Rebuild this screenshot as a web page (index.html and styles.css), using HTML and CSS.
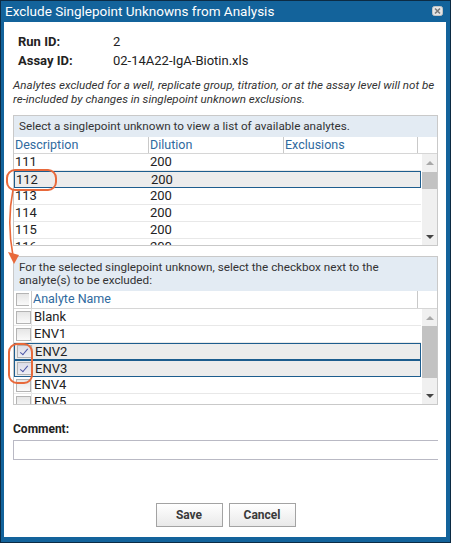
FILE: index.html
```html
<!DOCTYPE html>
<html lang="en">
<head>
  <meta charset="UTF-8">
  <title>Exclude Singlepoint Unknowns from Analysis</title>
  <link rel="stylesheet" href="styles.css">
</head>
<body>

  <div class="dialog">
    <div class="titlebar">
      <span class="title">Exclude Singlepoint Unknowns from Analysis</span>
      <span class="close">
        <svg width="11" height="10" viewBox="0 0 11 10">
          <rect x="0.5" y="0.5" width="10" height="9" rx="2" fill="#e6e6e6" stroke="#c4c4c4"/>
          <path d="M3 2.5 L8 7.5 M8 2.5 L3 7.5" stroke="#7a7a7a" stroke-width="1.6"/>
        </svg>
      </span>
    </div>

    <div class="content">
      <div class="info">
        <div class="info-row"><span class="info-label">Run ID:</span><span>2</span></div>
        <div class="info-row"><span class="info-label">Assay ID:</span><span>02-14A22-IgA-Biotin.xls</span></div>
      </div>

      <p class="note">Analytes excluded for a well, replicate group, titration, or at the assay level will not be <span class="nowrap">re-included</span> by changes in singlepoint unknown exclusions.</p>

      <!-- singlepoint unknowns -->
      <div class="grid">
        <div class="grid-band">Select a singlepoint unknown to view a list of available analytes.</div>
        <div class="grid-head head-samples">
          <span>Description</span>
          <span>Dilution</span>
          <span>Exclusions</span>
          <span></span>
        </div>
        <div class="grid-body body-samples">
          <div class="rows">
            <div class="row row-samples"><span>111</span><span>200</span><span></span></div>
            <div class="row row-samples selected"><span>112</span><span>200</span><span></span></div>
            <div class="row row-samples"><span>113</span><span>200</span><span></span></div>
            <div class="row row-samples"><span>114</span><span>200</span><span></span></div>
            <div class="row row-samples"><span>115</span><span>200</span><span></span></div>
            <div class="row row-samples"><span>116</span><span>200</span><span></span></div>
          </div>
          <div class="scrollbar">
            <span class="arrow-btn"><span class="arrow up"></span></span>
            <span class="track"><span class="thumb thumb-samples"></span></span>
            <span class="arrow-btn"><span class="arrow down"></span></span>
          </div>
        </div>
      </div>

      <!-- analytes -->
      <div class="grid grid-analytes">
        <div class="grid-band band-tall">For the selected singlepoint unknown, select the checkbox next to the<br>analyte(s) to be excluded:</div>
        <div class="grid-head head-analytes">
          <span class="check-cell"><span class="checkbox"></span></span>
          <span>Analyte Name</span>
          <span></span>
        </div>
        <div class="grid-body body-analytes">
          <div class="rows">
            <div class="row row-analytes"><span class="check-cell"><span class="checkbox"></span></span><span>Blank</span></div>
            <div class="row row-analytes"><span class="check-cell"><span class="checkbox"></span></span><span>ENV1</span></div>
            <div class="row row-analytes selected"><span class="check-cell"><span class="checkbox checked"></span></span><span>ENV2</span></div>
            <div class="row row-analytes selected"><span class="check-cell"><span class="checkbox checked"></span></span><span>ENV3</span></div>
            <div class="row row-analytes"><span class="check-cell"><span class="checkbox"></span></span><span>ENV4</span></div>
            <div class="row row-analytes"><span class="check-cell"><span class="checkbox"></span></span><span>ENV5</span></div>
          </div>
          <div class="scrollbar">
            <span class="arrow-btn"><span class="arrow up"></span></span>
            <span class="track"><span class="thumb thumb-analytes"></span></span>
            <span class="arrow-btn"><span class="arrow down"></span></span>
          </div>
        </div>
      </div>

      <label class="comment-label">Comment:</label>
      <input type="text" class="comment-input">

      <div class="buttons">
        <button class="btn">Save</button>
        <button class="btn">Cancel</button>
      </div>
    </div>

    <!-- callout annotations -->
    <svg class="marks" width="451" height="543" viewBox="0 0 451 543">
      <rect x="7" y="170" width="49" height="20" rx="8" fill="none" stroke="#e8693b" stroke-width="2"/>
      <path d="M13 190 C9 210, 9 235, 13 256" fill="none" stroke="#e8693b" stroke-width="1.6"/>
      <polygon points="8,252 19,255 14,264" fill="#e8693b"/>
      <rect x="9" y="344" width="23" height="39" rx="8" fill="none" stroke="#e8693b" stroke-width="2"/>
    </svg>
  </div>

</body>
</html>
```

FILE: styles.css
```css
/* Base */
body {
  margin: 0;
  font-family: Roboto, "Liberation Sans", Arial, sans-serif;
  color: #222;
}

.dialog {
  position: relative;
  width: 451px;
  height: 543px;
  box-sizing: border-box;
  border: 1px solid #0c2b44;
  background-color: #13639b;
  padding: 0 4px 5px 3px;
  display: flex;
  flex-direction: column;
}

/* Title bar */
.titlebar {
  height: 21px;
  display: flex;
  align-items: center;
  justify-content: space-between;
  padding: 0 3px 0 1px;
}

.title {
  color: #fff;
  font-size: 13.5px;
  line-height: 21px;
}

.close {
  display: flex;
  margin-top: -1px;
}

/* Content */
.content {
  flex: 1;
  background-color: #fff;
  padding: 10px 8px 0 9px;
  display: flex;
  flex-direction: column;
}

.info-row {
  display: flex;
  height: 19px;
  align-items: center;
  font-size: 13px;
  padding-left: 5px;
}

.info-label {
  width: 95px;
  font-weight: 700;
}

.note {
  margin: 8px 0 9px;
  font-size: 11.6px;
  font-style: italic;
  line-height: 14px;
  color: #333;
}

.nowrap {
  white-space: nowrap;
}

/* Grids */
.grid {
  border: 1px solid #c9c9c9;
  display: flex;
  flex-direction: column;
}

.grid-analytes {
  margin-top: 10px;
}

.grid-band {
  background-color: #e3ebf3;
  font-size: 11.7px;
  height: 21px;
  line-height: 21px;
  padding-left: 5px;
  color: #333;
}

.band-tall {
  height: 34px;
  line-height: 13px;
  padding-top: 4px;
  box-sizing: border-box;
}

.grid-head {
  display: grid;
  height: 16px;
  border-bottom: 1px solid #d6d6d6;
  font-size: 12.5px;
  color: #2f6a9e;
  line-height: 15px;
}

.grid-head span {
  border-right: 1px solid #c9c9c9;
  padding-left: 1px;
}

.grid-head span:last-child {
  border-right: none;
}

.head-samples {
  grid-template-columns: 135px 135px 134px 1fr;
}

.head-analytes {
  height: 17px;
  grid-template-columns: 18px 386px 1fr;
}

.grid-body {
  display: flex;
  overflow: hidden;
}

.body-samples {
  height: 91px;
}

.body-analytes {
  height: 95px;
}

.rows {
  flex: 1;
}

.row {
  display: grid;
  height: 17px;
  box-sizing: border-box;
  border-bottom: 1px solid #e8e8e8;
  font-size: 13px;
  line-height: 16px;
}

.row-samples {
  grid-template-columns: 135px 135px 1fr;
}

.row-samples span {
  padding-left: 1px;
}

.row-analytes {
  grid-template-columns: 18px 1fr;
}

.row-analytes span:last-child {
  padding-left: 2px;
}

.row.selected {
  background-color: #ececec;
  border: 1px solid #1d5d8e;
  line-height: 15px;
}

.check-cell {
  display: flex;
  align-items: center;
  padding-left: 2px !important;
  border-right: 1px solid #e4e4e4;
}

.grid-head .check-cell {
  border-right: 1px solid #c9c9c9;
}

.checkbox {
  width: 11px;
  height: 11px;
  border: 1px solid #b4b4b4;
  background: linear-gradient(#e6e6e6, #fafafa);
  position: relative;
}

.checkbox.checked {
  background: linear-gradient(#dcdde8, #eeeef4);
}

.checkbox.checked::after {
  content: "";
  position: absolute;
  left: 4px;
  top: 1px;
  width: 3px;
  height: 7px;
  border-right: 1.5px solid #4c55a6;
  border-bottom: 1.5px solid #4c55a6;
  transform: rotate(40deg);
}

/* Scrollbar */
.scrollbar {
  width: 15px;
  margin-left: 1px;
  background-color: #f0f0f0;
  display: flex;
  flex-direction: column;
}

.arrow-btn {
  height: 17px;
  display: flex;
  align-items: center;
  justify-content: center;
}

.track {
  flex: 1;
}

.thumb {
  display: block;
  background-color: #c2c2c2;
}

.thumb-samples {
  height: 17px;
  margin-top: 1px;
}

.thumb-analytes {
  height: 52px;
}

.arrow {
  width: 0;
  height: 0;
  border-left: 4px solid transparent;
  border-right: 4px solid transparent;
}

.arrow.up {
  border-bottom: 4px solid #a8a8a8;
}

.arrow.down {
  border-top: 4px solid #444;
}

/* Comment */
.comment-label {
  margin-top: 17px;
  font-size: 12px;
  font-weight: 700;
  color: #222;
}

.comment-input {
  margin-top: 4px;
  height: 20px;
  box-sizing: border-box;
  border: 1px solid #b9b9c4;
  border-right: none;
  width: 100%;
}

/* Buttons */
.buttons {
  margin-top: 43px;
  display: flex;
  justify-content: center;
  gap: 6px;
}

.btn {
  width: 67px;
  height: 24px;
  border: 1px solid #a3a3a3;
  background: linear-gradient(#ffffff, #e9e9e9);
  font-family: Roboto, "Liberation Sans", Arial, sans-serif;
  font-size: 12px;
  font-weight: 700;
  color: #3a3a3a;
  padding: 0;
}

/* Annotation overlay */
.marks {
  position: absolute;
  left: -1px;
  top: -1px;
  pointer-events: none;
}
```
